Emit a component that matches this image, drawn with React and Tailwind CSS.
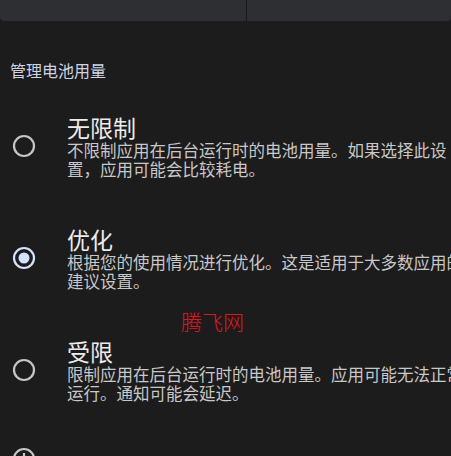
import React from 'react';

const options = [
  { title: '无限制', desc: '不限制应用在后台运行时的电池用量。如果选择此设置，应用可能会比较耗电。', checked: false },
  { title: '优化', desc: '根据您的使用情况进行优化。这是适用于大多数应用的建议设置。', checked: true },
  { title: '受限', desc: '限制应用在后台运行时的电池用量。应用可能无法正常运行。通知可能会延迟。', checked: false },
];

function Radio({ checked }) {
  return (
    <svg width="24" height="24" viewBox="0 0 24 24" className="shrink-0">
      <circle cx="12" cy="12" r="10" fill="none" stroke={checked ? '#d3e3fd' : '#c4c7c5'} strokeWidth="2.2" />
      {checked && <circle cx="12" cy="12" r="5.5" fill="#d3e3fd" />}
    </svg>
  );
}

function Option({ title, desc, checked }) {
  return (
    <div className="flex items-center pl-3 py-[23px]">
      <Radio checked={checked} />
      <div className="ml-[31px] w-[400px] shrink-0">
        <div className="text-[23px] leading-[28px] text-[#ececec]">{title}</div>
        <div className="text-[16.5px] leading-[19px] text-[#c8c8c8]">{desc}</div>
      </div>
    </div>
  );
}

export default function App() {
  return (
    <div className="relative h-[456px] w-[451px] overflow-hidden bg-[#1c1c1c]"
      style={{ fontFamily: '"Noto Sans CJK SC", "Noto Sans", sans-serif' }}>
      <div className="flex h-[21px] rounded-b-[4px] bg-[#2e2f33]">
        <div className="w-[247px] border-r border-[#1a1a1a]" />
        <div className="flex-1" />
      </div>

      <div className="pl-[10px] pt-[37px] pb-2 text-[16px] leading-[24px] text-[#cdd5e4]">管理电池用量</div>

      {options.map(o => <Option key={o.title} {...o} />)}

      <div className="flex pl-3 pt-[21px]">
        <svg width="24" height="24" viewBox="0 0 24 24" className="shrink-0">
          <circle cx="12" cy="12" r="10" fill="none" stroke="#c4c7c5" strokeWidth="2.2" />
          <line x1="12" y1="6" x2="12" y2="9" stroke="#c4c7c5" strokeWidth="2.2" />
        </svg>
      </div>

      <div className="absolute left-[181px] top-[311px] text-[21px] leading-none font-light text-[#e3141b]">腾飞网</div>
    </div>
  );
}
